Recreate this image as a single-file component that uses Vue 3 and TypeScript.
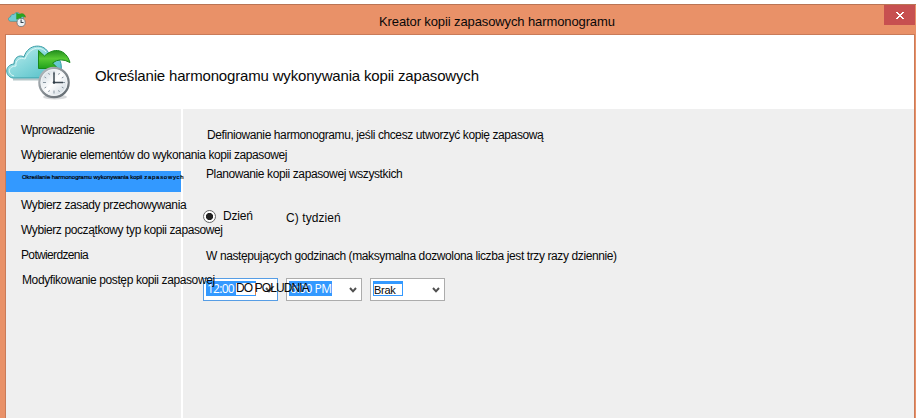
<script setup lang="ts">
interface Step { label: string; tail?: string; key: string; active?: boolean }

const steps: Step[] = [
  { key: 'intro', label: 'Wprowadzenie' },
  { key: 'items', label: 'Wybieranie elementów do wykonania kopii zapasowej' },
  { key: 'schedule', label: 'Określanie harmonogramu wykonywania kopii', tail: 'zapasowych', active: true },
  { key: 'retention', label: 'Wybierz zasady przechowywania' },
  { key: 'initial', label: 'Wybierz początkowy typ kopii zapasowej' },
  { key: 'confirm', label: 'Potwierdzenia' },
  { key: 'progress', label: 'Modyfikowanie postęp kopii zapasowej' },
]
</script>

<template>
  <div class="window">
    <header class="titlebar">
      <svg class="app-icon" viewBox="0 0 66 56" aria-hidden="true">
        <path d="M12 33C-1 33-2 19 9 17C10 9 17 5 22 8C28-3 42-1 45 9C54 8 59 18 56 26C54 31 49 33 44 33Z" fill="#72cbd2" stroke="#298f99" stroke-width="2" />
        <path d="M31 2V25L54 25L47 18Q53 13 65 18Q59 -2 41 7Z" fill="#2ba51e" stroke="#168015" />
        <circle cx="48" cy="37" r="15" fill="#edf1f4" stroke="#68747c" stroke-width="3" />
        <path d="M48 26V37H57" fill="none" stroke="#35434c" stroke-width="4" />
      </svg>
      <span class="title">Kreator kopii zapasowych harmonogramu</span>
      <button class="close" type="button" aria-label="Zamknij">
        <svg viewBox="0 0 8 7" shape-rendering="crispEdges"><path d="M0 0h2v1h1v1h2V1h1V0h2v1H7v1H6v1H5v1h1v1h1v1h1v1H6V6H5V5H3v1H2v1H0V6h1V5h1V4h1V3H2V2H1V1H0Z" fill="#fff" /></svg>
      </button>
    </header>

    <div class="frame">
      <section class="heading">
        <svg class="cloud" viewBox="0 0 66 56" aria-hidden="true">
          <defs>
            <linearGradient id="sky" x1="0" y1="0" x2="1" y2="1"><stop offset="0" stop-color="#c5f0f1" /><stop offset=".45" stop-color="#89d8dc" /><stop offset="1" stop-color="#4abbc4" /></linearGradient>
            <linearGradient id="leaf" x1="0" y1="0" x2="0" y2="1"><stop offset="0" stop-color="#238f1e" /><stop offset=".45" stop-color="#57c934" /><stop offset="1" stop-color="#20a11b" /></linearGradient>
            <linearGradient id="rim" x1="0" y1="0" x2="1" y2="1"><stop offset="0" stop-color="#bac0c4" /><stop offset=".5" stop-color="#858c91" /><stop offset="1" stop-color="#5f676d" /></linearGradient>
            <linearGradient id="face" x1="0" y1="0" x2="1" y2="1"><stop offset="0" stop-color="#c3cfd8" /><stop offset=".5" stop-color="#fff" /><stop offset="1" stop-color="#bfccd6" /></linearGradient>
          </defs>
          <path d="M7 34.5H37" stroke="#b5c6c8" stroke-width="2" />
          <path d="M7 33C-1 32-2 20 8 19C8 13 13 9 18 12C22-2 39-2 43 9C50 8 57 15 55 26C54 31 50 33 45 33Z" fill="url(#sky)" stroke="#389ba5" />
          <path d="M8 31C1 29 2 21 10 21C9 15 14 12 19 14C23 3 34 0 40 7" fill="none" stroke="#dcf7f7" stroke-width="1" />
          <path d="M32.5 5.5L38.5 11C48 2 60 4 64 17.5Q54 12 46.5 18L52 23.5H32.5Z" fill="url(#leaf)" stroke="#18891a" />
          <ellipse cx="49" cy="52" rx="12" ry="2.5" fill="#9aa1a6" opacity=".4" />
          <circle cx="48" cy="37.5" r="14.7" fill="url(#face)" stroke="url(#rim)" stroke-width="2.2" />
          <circle cx="48" cy="37.5" r="12.9" fill="none" stroke="#f1f4f6" />
          <path d="M48 26.5v3M48 45.5v3M37 37.5h3M56 37.5h3M42.5 28l1 1.7M53.5 28l-1 1.7M42.5 47l1-1.7M53.5 47l-1-1.7M38.5 32l1.7 1M57.5 32l-1.7 1M38.5 43l1.7-1M57.5 43l-1.7-1" stroke="#8795a0" />
          <path d="M48 27.5V37.5H57" fill="none" stroke="#3d4953" stroke-width="1.5" />
          <circle cx="48" cy="37.5" r="1.3" fill="#2f3c46" />
        </svg>
        <h1>Określanie harmonogramu wykonywania kopii zapasowych</h1>
      </section>

      <div class="body">
        <nav class="steps">
          <div v-for="step in steps" :key="step.key" class="step" :class="[step.key, { active: step.active }]">
            <span>{{ step.label }}</span><span v-if="step.tail" class="tail">{{ step.tail }}</span>
          </div>
        </nav>

        <main class="content">
          <p class="define">Definiowanie harmonogramu, jeśli chcesz utworzyć kopię zapasową</p>
          <p class="plan">Planowanie kopii zapasowej wszystkich</p>
          <div class="choices">
            <span class="radio"></span>
            <span class="day">Dzień</span>
            <span class="week">C) tydzień</span>
          </div>
          <p class="times">W następujących godzinach (maksymalna dozwolona liczba jest trzy razy dziennie)</p>
          <div class="combos">
            <div class="combo focus">
              <span class="value first">12:00</span>
              <svg class="chevron" viewBox="0 0 8 6"><path d="M1 1L4 4.3L7 1" /></svg>
              <span class="edit-box"></span>
              <span class="noon">DO POŁUDNIA</span>
            </div>
            <div class="combo wide">
              <span class="value second">6:00 PM</span>
              <svg class="chevron" viewBox="0 0 8 6"><path d="M1 1L4 4.3L7 1" /></svg>
            </div>
            <div class="combo">
              <span class="none">Brak</span>
              <svg class="chevron" viewBox="0 0 8 6"><path d="M1 1L4 4.3L7 1" /></svg>
            </div>
          </div>
        </main>
      </div>
    </div>
  </div>
</template>

<style>
body { background: #fff; overflow: hidden; }
</style>

<style scoped>
* { box-sizing: border-box; }
.window { width: 916px; height: 414px; margin-top: 4px; display: flex; flex-direction: column; background: #e99168; border-top: 1px solid #b97455; font: 12px/18px "Liberation Sans", Arial, sans-serif; color: #080808; white-space: nowrap; }
.titlebar { height: 29px; display: flex; align-items: flex-start; flex: none; padding-right: 1px; }
.app-icon { width: 18px; height: 16px; margin: 7px 0 0 8px; }
.title { margin: 8px 0 0 353px; font-size: 13px; letter-spacing: -.11px; }
.close { width: 31px; height: 20px; margin-left: auto; padding: 0; border: 0; background: #c75050; display: flex; align-items: center; justify-content: center; }
.close svg { width: 8px; height: 7px; margin-left: 1px; margin-top: 1px; }
.frame { flex: 1; min-height: 0; display: flex; flex-direction: column; margin: 0 1px 0 5px; border: solid #c97b59; border-width: 1px 1px 0; background: #fff; }
.heading { height: 74px; flex: none; display: flex; }
.cloud { width: 66px; height: 56px; margin-top: 10px; }
h1 { margin: 32px 0 0 23px; font-size: 15px; line-height: 18px; font-weight: 400; letter-spacing: -.17px; }
.body { flex: 1; min-height: 0; display: flex; background: #efefef; }
.steps { position: relative; z-index: 2; width: 177px; padding-top: 12px; display: flex; flex-direction: column; gap: 4px; border-right: 2px solid #fff; }
.step { height: 21px; padding-left: 15px; flex: none; }
.step.active { background: #3399ff; padding-left: 16px; font-size: 6px; line-height: 12px; letter-spacing: -.05px; color: #000; -webkit-text-stroke: .2px #000; }
.tail { margin-left: 2px; letter-spacing: .7px; }
.intro { letter-spacing: -.5px; }
.items { letter-spacing: -.41px; }
.retention, .initial { letter-spacing: -.395px; }
.confirm { letter-spacing: -.65px; }
.progress { letter-spacing: -.39px; padding-left: 16px; }
.content { flex: 1; min-width: 0; padding: 17px 0 0 20px; }
p { margin: 0; padding-left: 3px; letter-spacing: -.39px; }
.define { padding-left: 4px; letter-spacing: -.4px; }
.plan { margin-top: 21px; letter-spacing: -.39px; }
.choices { height: 18px; display: flex; margin-top: 24px; }
.radio { width: 13px; height: 13px; margin-top: 3px; border: 1px solid #666; border-radius: 50%; background: radial-gradient(circle, #222 0 3.2px, #fff 4px); }
.day { width: 63px; margin-left: 7px; letter-spacing: -.2px; }
.week { margin-top: 2px; letter-spacing: .08px; }
.times { margin-top: 22px; }
.combos { display: flex; gap: 8px; margin-top: 13px; }
.combo { position: relative; width: 75px; height: 23px; padding: 2px 4px 0 2px; display: flex; align-items: flex-start; justify-content: space-between; border: 1px solid #acacac; background: #fff; }
.combo.wide { width: 76px; }
.combo.focus { border-color: #569de5; }
.value { height: 15px; font: 12px/15px "Open Sans", "Noto Sans", sans-serif; color: #fff; background: #3399ff; }
.first { width: 50px; padding-left: 1px; letter-spacing: -.75px; }
.second { width: 43px; padding-left: 1px; letter-spacing: -.45px; }
.edit-box { position: absolute; left: 32px; top: 4px; width: 20px; height: 12px; background: #fff; }
.noon { position: absolute; z-index: 3; left: 32px; top: 0; letter-spacing: -.9px; }
.combo.focus .edit-box { border-right: 1px solid #e08748; }
.none { width: 30px; height: 15px; padding-left: 0; border: 1px solid #3399ff; border-top-width: 3px; background: #fff; font-size: 11px; line-height: 13px; letter-spacing: -.3px; }
.chevron { width: 8px; height: 6px; margin-top: 6px; flex: none; }
.chevron path { fill: none; stroke: #505050; stroke-width: 2; }
</style>
